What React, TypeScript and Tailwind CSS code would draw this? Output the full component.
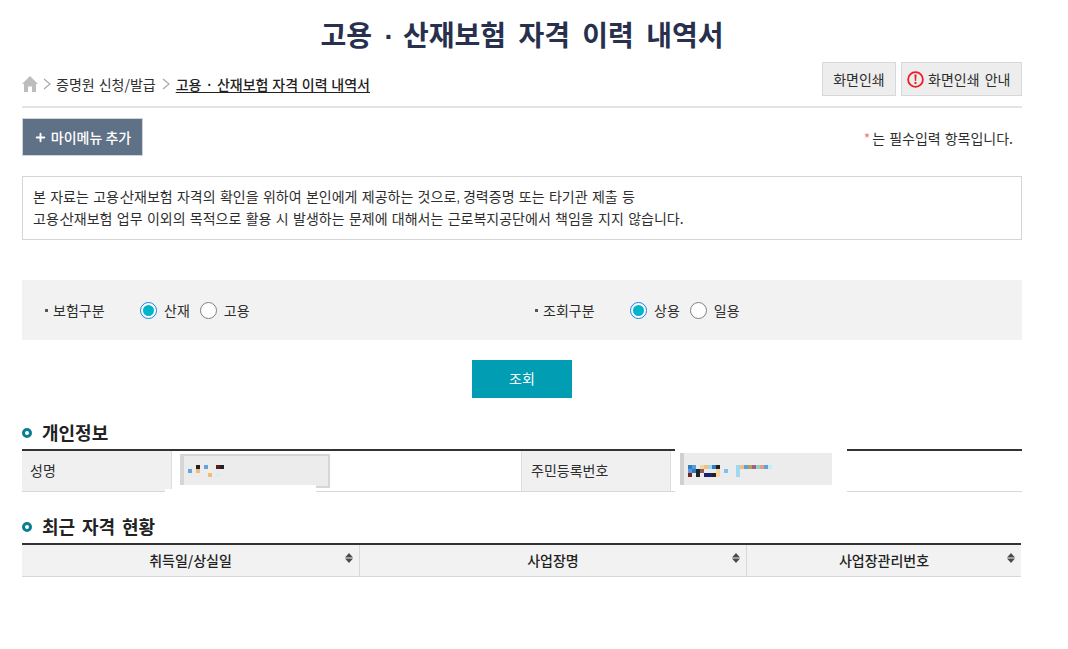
import { Plus } from "lucide-react";

const font = '"Noto Sans CJK KR", "Noto Sans", sans-serif';

// 이름 모자이크
const namePixels: [number, number, string][] = [
  [8, 15, "#63a4e0"], [16, 11, "#222222"], [16, 15, "#f0bb7c"], [24, 11, "#63a4e0"],
  [28, 15, "#f5f0d8"], [28, 19, "#f0bb7c"], [36, 11, "#5a2020"], [40, 11, "#222222"], [36, 19, "#d8eef0"],
];

// 주민번호 모자이크
const idPixels: [number, number, string][] = [
  [8, 12, "#2a7fc4"], [12, 12, "#5a9ad8"], [20, 12, "#f0d8a0"], [24, 12, "#f0c080"], [28, 12, "#a0d8f0"], [32, 12, "#2a80c8"], [36, 12, "#222222"],
  [8, 16, "#5a9ad8"], [12, 16, "#2a7fc4"], [16, 16, "#222222"], [20, 16, "#8a5a5a"], [36, 16, "#f0d8a0"],
  [8, 20, "#7a2020"], [16, 20, "#222222"], [24, 20, "#1f1f70"], [28, 20, "#1f1f70"], [32, 20, "#222222"], [36, 20, "#f0d8a0"],
  [44, 16, "#80c0f0"],
  [56, 12, "#a0d8f0"], [56, 16, "#a0d8f0"], [56, 20, "#a0d8f0"], [60, 12, "#f0c080"], [64, 12, "#60a0d8"], [68, 12, "#b0a060"],
  [72, 12, "#a06080"], [76, 12, "#90d0d0"], [80, 12, "#e0a080"], [84, 12, "#60a0e0"], [88, 12, "#c0f0f0"],
];

function Mosaic({ pixels }: { pixels: [number, number, string][] }) {
  return (
    <svg className="absolute inset-0 w-full h-full">
      {pixels.map(([x, y, c]) => (
        <rect key={`${x}-${y}`} x={x} y={y} width="4" height="4" fill={c} />
      ))}
    </svg>
  );
}

function Radio({ label, checked }: { label: string; checked?: boolean }) {
  return (
    <label className="flex items-center gap-[7px]">
      {checked ? (
        <span className="w-[17px] h-[17px] rounded-full border border-[#1a7fe0] bg-white flex items-center justify-center">
          <span className="w-[11px] h-[11px] rounded-full bg-[#00b4cc]"></span>
        </span>
      ) : (
        <span className="w-[17px] h-[17px] rounded-full border border-[#808080] bg-white"></span>
      )}
      <span>{label}</span>
    </label>
  );
}

function SortIcon() {
  return (
    <svg className="absolute right-[6px] top-[8px]" width="8" height="10" viewBox="0 0 8 10">
      <path d="M4 0L8 4.5H0Z" fill="#4a4a4a" />
      <path d="M0 5.5H8L4 10Z" fill="#4a4a4a" />
    </svg>
  );
}

function Heading({ children }: { children: string }) {
  return (
    <div className="flex items-center gap-[10px] h-[26px]">
      <span className="w-[10px] h-[10px] rounded-full border-[3px] border-[#0b7d95]"></span>
      <h3 className="-mt-[2px] text-[18px] font-bold text-[#222] [word-spacing:2.8px]">{children}</h3>
    </div>
  );
}

function Chevron() {
  return (
    <svg width="8" height="12" viewBox="0 0 8 12" fill="none" stroke="#aaaaaa" strokeWidth="1.2">
      <path d="M1 1L7 6L1 11" />
    </svg>
  );
}

// 가운뎃점, 쉼표는 폭이 좁다
function NarrowDot() {
  return <span className="[font-family:'Liberation_Sans'] tracking-[-2.5px]">·</span>;
}

export default function App() {
  return (
    <div className="h-[649px] bg-white overflow-hidden text-[14px] leading-[20px] text-[#2e2e2e] [word-spacing:0.9px]" style={{ fontFamily: font }}>
      <div className="w-[1000px] ml-[22px]">
        <h2 className="pt-[12px] h-[62px] text-center text-[28px] leading-[44px] font-bold text-[#27304d] [word-spacing:6px]">
          고용 <span className="[font-family:'Liberation_Sans'] tracking-[-3px]">·</span> 산재보험 자격 이력 내역서
        </h2>

        {/* 경로 + 인쇄 버튼 */}
        <div className="flex justify-between h-[46px] border-b-2 border-[#e4e4e4]">
          <div className="flex items-center gap-[5px] h-[44px]">
            <svg width="16" height="16" viewBox="0 0 16 16" fill="#bdbdbd">
              <path d="M8 0L16 8H14V16H10V10.5H6V16H2V8H0Z" />
            </svg>
            <Chevron />
            <span>증명원 신청/발급</span>
            <span className="ml-[1px]"><Chevron /></span>
            <span className="ml-[1px] font-medium underline underline-offset-2 text-[#222] [word-spacing:0.6px]">고용 · 산재보험 자격 이력 내역서</span>
          </div>
          <div className="flex gap-[5px] h-[34px]">
            <button className="w-[74px] bg-[#ededed] border border-[#d8d8d8]">화면인쇄</button>
            <button className="w-[121px] pl-[5px] bg-[#ededed] border border-[#d8d8d8] flex items-center gap-[4px]">
              <svg width="17" height="17" viewBox="0 0 17 17">
                <circle cx="8.5" cy="8.5" r="7.4" fill="none" stroke="#ee1c25" strokeWidth="1.8" />
                <path d="M7.4 3.5H9.6L9.1 10H7.9Z" fill="#ee1c25" />
                <rect x="7.5" y="11" width="2" height="2" fill="#ee1c25" />
              </svg>
              <span className="[word-spacing:2px]">화면인쇄 안내</span>
            </button>
          </div>
        </div>

        <div className="flex justify-between mt-[10px] h-[38px]">
          <button className="w-[121px] bg-[#5f7186] border border-[#cfd4da] text-white flex items-center justify-center gap-[4px] font-medium">
            <Plus size={13} strokeWidth={3.5} />
            <span>마이메뉴 추가</span>
          </button>
          <p className="mt-[10px] mr-[9px]"><span className="text-[#f07878] text-[14px] mr-[2px]">*</span>는 필수입력 항목입니다.</p>
        </div>

        <div className="mt-[20px] h-[64px] border border-[#d5d5d5] px-[10px] py-[9px] leading-[21px] [word-spacing:1.2px]">
          <p>본 자료는 고용<NarrowDot />산재보험 자격의 확인을 위하여 본인에게 제공하는 것으로<span className="[font-family:'Liberation_Sans'] tracking-[-1.5px]">,</span> 경력증명 또는 타기관 제출 등</p>
          <p>고용<NarrowDot />산재보험 업무 이외의 목적으로 활용 시 발생하는 문제에 대해서는 근로복지공단에서 책임을 지지 않습니다.</p>
        </div>

        {/* 조회 조건 */}
        <div className="mt-[40px] h-[60px] bg-[#f2f2f2] grid grid-cols-2 items-center">
          <div className="flex items-center pl-[23px]">
            <span className="w-[3px] h-[3px] bg-[#555] mr-[5px]"></span>
            <span className="w-[87px]">보험구분</span>
            <div className="flex gap-[10px]">
              <Radio label="산재" checked />
              <Radio label="고용" />
            </div>
          </div>
          <div className="flex items-center pl-[13px]">
            <span className="w-[3px] h-[3px] bg-[#555] mr-[5px]"></span>
            <span className="w-[87px]">조회구분</span>
            <div className="flex gap-[10px]">
              <Radio label="상용" checked />
              <Radio label="일용" />
            </div>
          </div>
        </div>

        <div className="flex justify-center mt-[20px]">
          <button className="w-[100px] h-[38px] pb-[2px] bg-[#009db3] text-white">조회</button>
        </div>

        {/* 개인정보 */}
        <div className="mt-[22px]"><Heading>개인정보</Heading></div>
        <div className="relative mt-[3px] grid grid-cols-[150px_349px_150px_351px] h-[43px] border-t-2 border-b border-t-[#333] border-b-[#d8d8d8]">
          <div className="bg-[#f0f0f0] border-r border-[#dddddd] pl-[8px] pb-[2px] flex items-center">성명</div>
          <div></div>
          <div className="bg-[#f0f0f0] border-x border-[#dddddd] pl-[9px] pb-[2px] flex items-center">주민등록번호</div>
          <div></div>
          {/* 입력칸 + 가림 처리 */}
          <div className="absolute left-[158px] top-[3px] w-[150px] h-[34px] bg-[#ececec] border-2 border-l-4 border-[#d6d6d6]">
            <div className="absolute -left-[4px] -top-[2px] w-[150px] h-[34px]"><Mosaic pixels={namePixels} /></div>
          </div>
          <div className="absolute left-[143px] top-[38px] w-[7px] h-[3px] bg-white"></div>
          <div className="absolute left-[150px] top-[34px] w-[144px] h-[7px] bg-white"></div>
          <div className="absolute left-[653px] -top-[4px] w-[172px] h-[48px] bg-white"></div>
          <div className="absolute left-[658px] top-[2px] w-[152px] h-[32px] bg-[#ececec] border-l-4 border-[#d0d0d0]">
            <div className="absolute -left-[4px] top-0 w-[152px] h-[32px]"><Mosaic pixels={idPixels} /></div>
          </div>
        </div>

        {/* 최근 자격 현황 */}
        <div className="mt-[22px]"><Heading>최근 자격 현황</Heading></div>
        <div className="mt-[3px] grid grid-cols-[338px_387px_274px] w-[999px] h-[34px] border-t-2 border-b border-t-[#333] border-b-[#d8d8d8] bg-[#f2f2f2] font-medium text-[#222]">
          <div className="relative border-r border-[#d8d8d8] pb-[2px] flex items-center justify-center">취득일/상실일<SortIcon /></div>
          <div className="relative border-r border-[#d8d8d8] pb-[2px] flex items-center justify-center">사업장명<SortIcon /></div>
          <div className="relative pb-[2px] flex items-center justify-center">사업장관리번호<SortIcon /></div>
        </div>
      </div>
    </div>
  );
}
